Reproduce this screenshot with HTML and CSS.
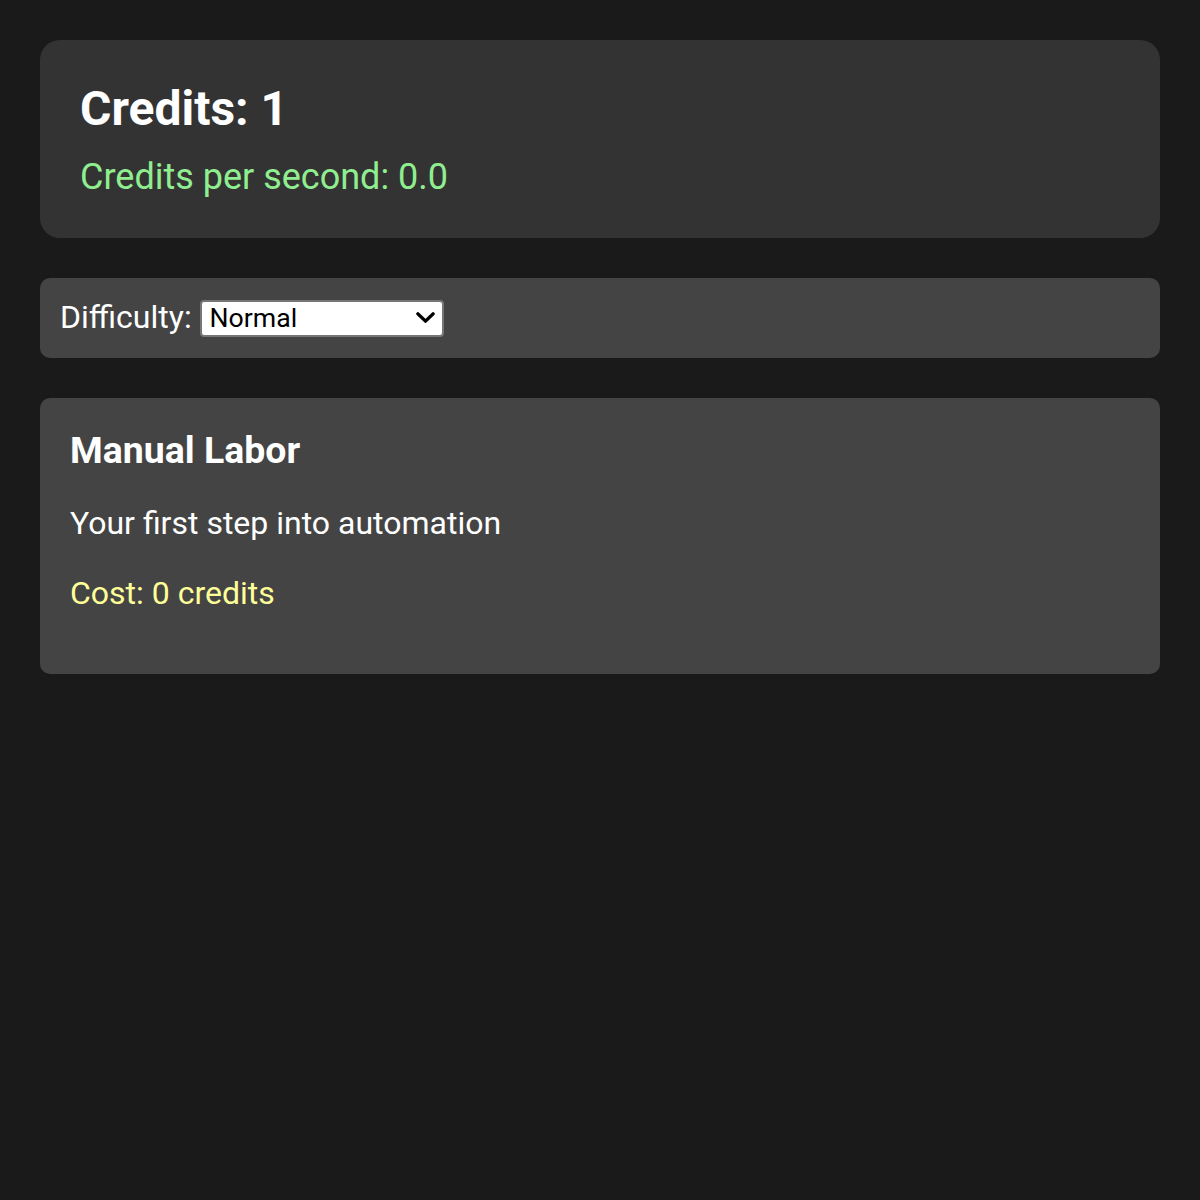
FILE: index.html
```html
<!DOCTYPE html>
<html lang="en">
<head>
<meta charset="utf-8">
<title>Credits</title>
<link rel="stylesheet" href="styles.css">
</head>
<body>
  <div class="stats">
    <h2 class="credits">Credits: 1</h2>
    <p class="rate">Credits per second: 0.0</p>
  </div>
  <div class="difficulty">
    <label for="difficulty">Difficulty:</label>
    <select id="difficulty" class="difficulty-select">
      <option>Normal</option>
      <option>Easy</option>
      <option>Hard</option>
    </select>
  </div>
  <div class="upgrade">
    <h3 class="upgrade-title">Manual Labor</h3>
    <p class="upgrade-desc">Your first step into automation</p>
    <p class="upgrade-cost">Cost: 0 credits</p>
  </div>
</body>
</html>
```
FILE: styles.css
```css
html {
  zoom: 2;
  background: #1a1a1a;
}
body {
  margin: 0;
  padding: 20px;
  background: #1a1a1a;
  color: #ffffff;
  font-family: Roboto, "Liberation Sans", sans-serif;
  font-size: 16px;
}
.stats {
  background: #333333;
  padding: 20px;
  border-radius: 10px;
  margin-bottom: 20px;
}
.credits {
  font-size: 24px;
  font-weight: 700;
  margin: 0 0 9.5px;
}
.rate {
  margin: 0;
  font-size: 18px;
  color: #90ee90;
}
.difficulty {
  background: #444444;
  padding: 10px 10px 10.5px;
  border-radius: 5px;
  margin-bottom: 20px;
}
.difficulty-select {
  -webkit-appearance: none;
  appearance: none;
  box-sizing: border-box;
  width: 122px;
  height: 18.5px;
  margin: 0;
  padding: 0 0 0 4px;
  border: 1px solid #767676;
  border-radius: 2px;
  background-color: #ffffff;
  background-image: url("data:image/svg+xml,%3Csvg xmlns='http://www.w3.org/2000/svg' width='10' height='6' viewBox='0 0 10 6'%3E%3Cpath d='M1 1l4 4 4-4' fill='none' stroke='%23000' stroke-width='1.8' stroke-linecap='round' stroke-linejoin='round'/%3E%3C/svg%3E");
  background-repeat: no-repeat;
  background-position: right 3.5px center;
  background-size: 9.5px 5.7px;
  color: #000000;
  font-family: Roboto, "Liberation Sans", sans-serif;
  font-size: 13.333px;
  vertical-align: 0.5px;
}
.upgrade {
  background: #444444;
  padding: 15px;
  border-radius: 5px;
}
.upgrade-title {
  margin: 0;
  font-size: 1.17em;
}
.upgrade-desc {
  margin: 16px 0;
}
.upgrade-cost {
  margin: 16px 0;
  color: #ffff99;
}
```
